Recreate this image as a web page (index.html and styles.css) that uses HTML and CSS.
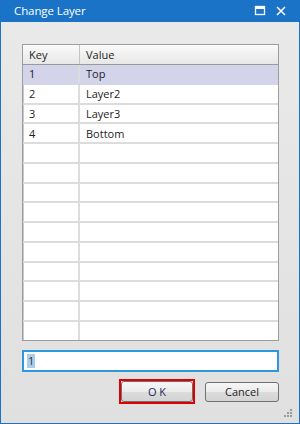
FILE: index.html
```html
<!DOCTYPE html>
<html>
<head>
<meta charset="utf-8">
<link rel="stylesheet" href="styles.css">
</head>
<body>
<div class="window">
  <div class="titlebar">
    <span class="title">Change Layer</span>
    <div class="controls">
      <svg class="ctl" width="12" height="12" viewBox="0 0 12 12"><rect x="1.5" y="1.5" width="9" height="8" fill="none" stroke="#fff" stroke-width="1.3"/><rect x="1.5" y="1.5" width="9" height="2.5" fill="#fff"/></svg>
      <svg class="ctl" width="12" height="12" viewBox="0 0 12 12"><path d="M2 2 L10 10 M10 2 L2 10" stroke="#fff" stroke-width="1.5"/></svg>
    </div>
  </div>
  <div class="content">
    <div class="grid">
      <div class="row head"><div class="c1">Key</div><div class="c2">Value</div></div>
      <div class="row sel"><div class="c1">1</div><div class="c2">Top</div></div>
      <div class="row"><div class="c1">2</div><div class="c2">Layer2</div></div>
      <div class="row"><div class="c1">3</div><div class="c2">Layer3</div></div>
      <div class="row"><div class="c1">4</div><div class="c2">Bottom</div></div>
      <div class="row"><div class="c1"></div><div class="c2"></div></div>
      <div class="row"><div class="c1"></div><div class="c2"></div></div>
      <div class="row"><div class="c1"></div><div class="c2"></div></div>
      <div class="row"><div class="c1"></div><div class="c2"></div></div>
      <div class="row"><div class="c1"></div><div class="c2"></div></div>
      <div class="row"><div class="c1"></div><div class="c2"></div></div>
      <div class="row"><div class="c1"></div><div class="c2"></div></div>
      <div class="row"><div class="c1"></div><div class="c2"></div></div>
      <div class="row"><div class="c1"></div><div class="c2"></div></div>
      <div class="row"><div class="c1"></div><div class="c2"></div></div>
    </div>
    <div class="input"><span class="seltext">1</span></div>
    <div class="buttons">
      <div class="highlight"><div class="btn ok">O K</div></div>
      <div class="btn cancel">Cancel</div>
    </div>
    <div class="grip">
      <svg width="9" height="9" viewBox="0 0 9 9">
        <rect x="6" y="0" width="2" height="2" fill="#9a9a9a"/>
        <rect x="3" y="3" width="2" height="2" fill="#9a9a9a"/>
        <rect x="6" y="3" width="2" height="2" fill="#9a9a9a"/>
        <rect x="0" y="6" width="2" height="2" fill="#9a9a9a"/>
        <rect x="3" y="6" width="2" height="2" fill="#9a9a9a"/>
        <rect x="6" y="6" width="2" height="2" fill="#9a9a9a"/>
      </svg>
    </div>
  </div>
</div>
</body>
</html>
```
FILE: styles.css
```css
* { box-sizing: border-box; }
html, body { margin: 0; padding: 0; }
body {
  width: 300px;
  height: 424px;
  overflow: hidden;
  font-family: "Open Sans", "Noto Sans", sans-serif;
  font-size: 11px;
  color: #1e1e1e;
}
.window {
  width: 300px;
  height: 424px;
  border: 1px solid #1a73c6;
  border-top: none;
  display: flex;
  flex-direction: column;
  background: #e4e4e4;
}
.titlebar {
  height: 22px;
  flex: none;
  background: #1a73c6;
  display: flex;
  align-items: center;
  justify-content: space-between;
  padding: 0 12px 1px 13px;
  color: #fff;
}
.title { font-size: 11.5px; letter-spacing: -0.1px; }
.controls { display: flex; gap: 9px; align-items: center; }
.ctl { display: block; }
.content {
  flex: 1;
  position: relative;
  padding: 22px 20px 0 21px;
  background: linear-gradient(to bottom, #e9e9e9, #e0e0e0);
}
.grid {
  height: 297px;
  border: 1px solid #9d9d9d;
  box-shadow: inset 1px 1px 0 #c8c8c8;
  background: #fff;
  overflow: hidden;
}
.row {
  display: flex;
  height: 19.75px;
  border-bottom: 2px solid #dcdcdc;
}
.row.head {
  height: 20px;
  background: linear-gradient(to bottom, #fafafa, #e7e7e7);
  border-bottom: 1px solid #9a9a9a;
}
.row.sel { background: #d3d3ea; border-bottom-color: #d3d3ea; }
.c1, .c2 {
  display: flex;
  align-items: center;
  padding-left: 6px;
  line-height: 1;
}
.c1 { width: 57px; border-right: 2px solid #dcdcdc; }
.head .c1 { border-right: 1px solid #c4c4c4; }
.c2 { flex: 1; }
.input {
  margin-top: 9px;
  height: 22px;
  border: 2px solid #2e98dc;
  background: #fff;
  display: flex;
  align-items: center;
  padding-left: 3px;
}
.seltext {
  background: #a9cdef;
  color: #333;
  padding: 1px 1px;
  line-height: 1.1;
}
.buttons {
  display: flex;
  justify-content: flex-end;
  align-items: center;
  gap: 10px;
  margin-top: 7px;
}
.highlight {
  border: 2px solid #e00000;
  padding: 0;
  background: #e4e4e4;
}
.btn {
  height: 20px;
  border: 1px solid #707070;
  border-radius: 3px;
  background: linear-gradient(to bottom, #f6f6f6 0%, #ebebeb 50%, #dcdcdc 51%, #d3d3d3 100%);
  display: flex;
  align-items: center;
  justify-content: center;
  color: #1e1e1e;
}
.ok { width: 72px; height: 21px; color: #1d2a5a; }
.cancel { width: 74px; }
.grip {
  position: absolute;
  right: 6px;
  bottom: 5px;
}
.grip svg { display: block; }
```
